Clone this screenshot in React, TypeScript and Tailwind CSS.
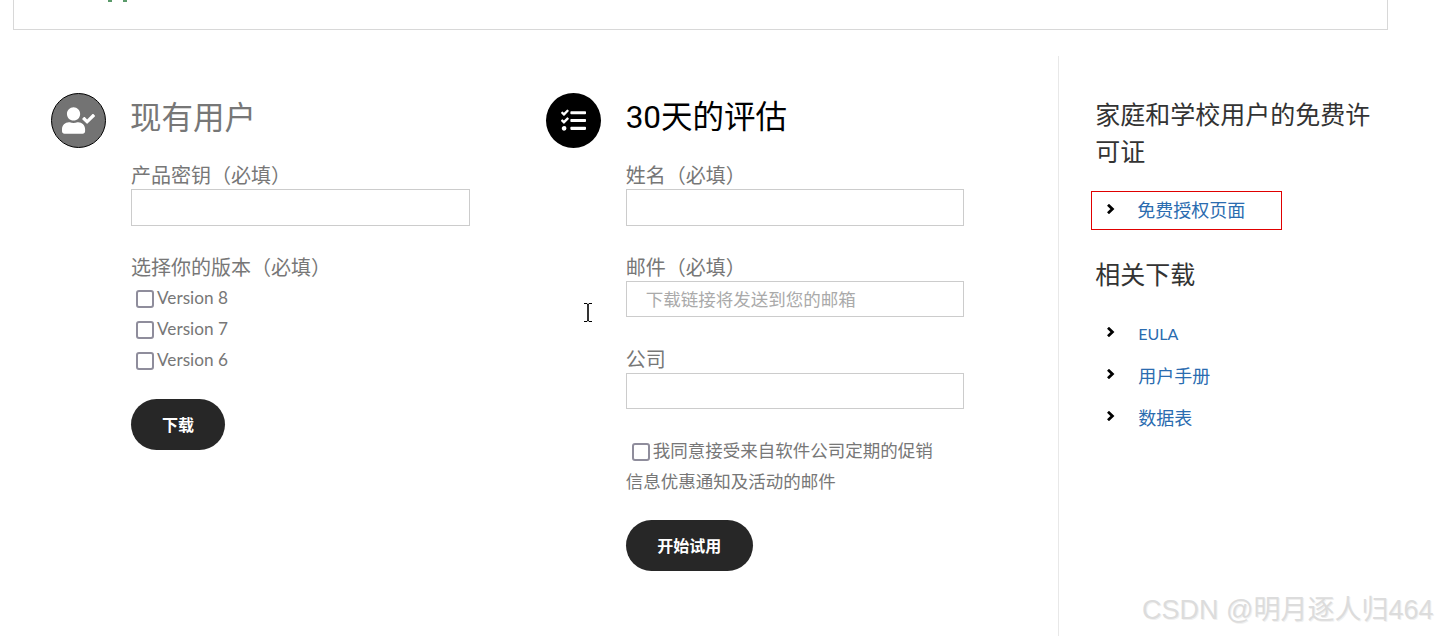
import React from "react";
import { FaUserCheck, FaTasks } from "react-icons/fa";

const cjk = "font-['Lato','Noto_Sans_CJK_SC',sans-serif]";

function Field({ label, placeholder, mt, h }: { label: string; placeholder?: string; mt: string; h: string }) {
  return (
    <div className={mt}>
      <div className="text-[20px] leading-[24px] text-[#777]">{label}</div>
      <input
        placeholder={placeholder}
        className={`mt-[2px] block w-full border border-[#ccc] bg-white px-[19px] text-[17.5px] text-[#777] outline-none placeholder:text-[#aaa] ${h}`}
      />
    </div>
  );
}

function Box() {
  return <span className="inline-block h-[18px] w-[18px] shrink-0 rounded-[3px] border-2 border-[#8f8d9c] bg-white" />;
}

function Version({ n }: { n: number }) {
  return (
    <div className="flex h-[31px] items-center pl-[5px] text-[17.2px] text-[#777]">
      <Box />
      <span className="ml-[3px] -translate-y-[1px]">Version {n}</span>
    </div>
  );
}

function Chevron({ boxed }: { boxed?: boolean }) {
  return (
    <svg width="10" height="10" viewBox="0 0 10 10" fill="none" stroke="black" strokeWidth="2.8" className={`shrink-0 ${boxed ? "mb-[4px]" : "mb-[5px]"}`}>
      <path d="M2 .8 6.4 5 2 9.2" />
    </svg>
  );
}

function LinkRow({ text, boxed, small }: { text: string; boxed?: boolean; small?: boolean }) {
  return (
    <div
      className={
        boxed
          ? "flex h-[39px] w-[191px] items-center border border-[#e00000] pl-[14px] text-[18px] text-[#2b6cb0]"
          : `flex h-[42px] items-center pl-[15px] text-[#2b6cb0] ${small ? "text-[16px]" : "text-[18px]"}`
      }
    >
      <Chevron boxed={boxed} />
      <span className={boxed ? "ml-[21px]" : "ml-[22px]"}>{text}</span>
    </div>
  );
}

export default function App() {
  return (
    <div className={`relative h-[636px] w-[1436px] overflow-hidden bg-white ${cjk}`}>
      <div className="ml-[13px] h-[30px] w-[1375px] border-x border-b border-[#d8d8d8]" />
      <div className="mt-[26px] flex">
        <section className="ml-[51px] flex w-[495px] pt-[37px]">
          <div className="flex h-[55px] w-[55px] shrink-0 items-center justify-center rounded-full border border-black bg-[#737373]">
            <FaUserCheck className="h-[27px] w-[33px] text-white" />
          </div>
          <div className="ml-[25px] w-[339px]">
            <h2 className="-ml-[1px] text-[31.5px] font-normal leading-[48px] text-[#777]">现有用户</h2>
            <Field label="产品密钥（必填）" mt="mt-[22px]" h="h-[37px]" />
            <div className="mt-[29px] text-[20px] leading-[24px] text-[#777]">选择你的版本（必填）</div>
            <div className="mt-[4px]">
              <Version n={8} />
              <Version n={7} />
              <Version n={6} />
            </div>
            <button className="mt-[23px] h-[51px] w-[94px] rounded-full bg-[#272727] text-[16px] font-bold text-white">下载</button>
          </div>
        </section>

        <section className="flex w-[513px] pt-[37px]">
          <div className="flex h-[55px] w-[55px] shrink-0 items-center justify-center rounded-full bg-black">
            <FaTasks className="h-[25px] w-[27px] text-white" />
          </div>
          <div className="ml-[25px] w-[338px]">
            <h2 className="text-[31.5px] font-normal leading-[50px] text-black font-['Roboto','Noto_Sans_CJK_SC',sans-serif]">30天的评估</h2>
            <Field label="姓名（必填）" mt="mt-[20px]" h="h-[37px]" />
            <Field label="邮件（必填）" placeholder="下载链接将发送到您的邮箱" mt="mt-[29px]" h="h-[36px]" />
            <Field label="公司" mt="mt-[30px]" h="h-[36px]" />
            <div className="mt-[26px] text-[17.5px] leading-[31px] text-[#777]">
              <span className="ml-[6px] mr-[3px] inline-block h-[18px] w-[18px] translate-y-[4px] rounded-[3px] border-2 border-[#8f8d9c] bg-white" />
              我同意接受来自软件公司定期的促销
              <br />
              信息优惠通知及活动的邮件
            </div>
            <button className="mt-[23px] h-[51px] w-[127px] rounded-full bg-[#272727] text-[16px] font-bold text-white">开始试用</button>
          </div>
        </section>

        <aside className="h-[580px] w-[378px] border-l border-[#e8e8e8] pl-[32px] pt-[40px]">
          <h3 className="ml-[4px] w-[290px] text-[25px] font-normal leading-[37px] text-[#333]">家庭和学校用户的免费许可证</h3>
          <div className="mt-[21px]"><LinkRow text="免费授权页面" boxed /></div>
          <h3 className="ml-[4px] mt-[26px] text-[25px] font-normal leading-[37px] text-[#333]">相关下载</h3>
          <div className="mt-[20px]">
            <LinkRow text="EULA" small />
            <LinkRow text="用户手册" />
            <LinkRow text="数据表" />
          </div>
        </aside>
      </div>

      <div className="absolute left-[108px] top-0 h-[2px] w-[4px] bg-[#5a9a6a]" />
      <div className="absolute left-[123px] top-0 h-[2px] w-[4px] bg-[#5a9a6a]" />
      <div className="absolute left-[584px] top-[303px] text-[0px]">
        <svg width="8" height="20" viewBox="0 0 8 20" fill="none" stroke="black" strokeWidth="1">
          <path d="M0 .5h3l1 1 1-1h3M0 18.5h3l1-1 1 1h3" />
          <path d="M4 1v17" strokeWidth="1.6" />
        </svg>
      </div>
      <div className="absolute left-[1142px] top-[593px] whitespace-nowrap text-[27px] leading-[34px] text-[#dcdcdc] [text-shadow:1px_1px_0_#f0f0f0] font-['Liberation_Sans','Noto_Sans_CJK_SC',sans-serif]">
        CSDN @明月逐人归464
      </div>
    </div>
  );
}
